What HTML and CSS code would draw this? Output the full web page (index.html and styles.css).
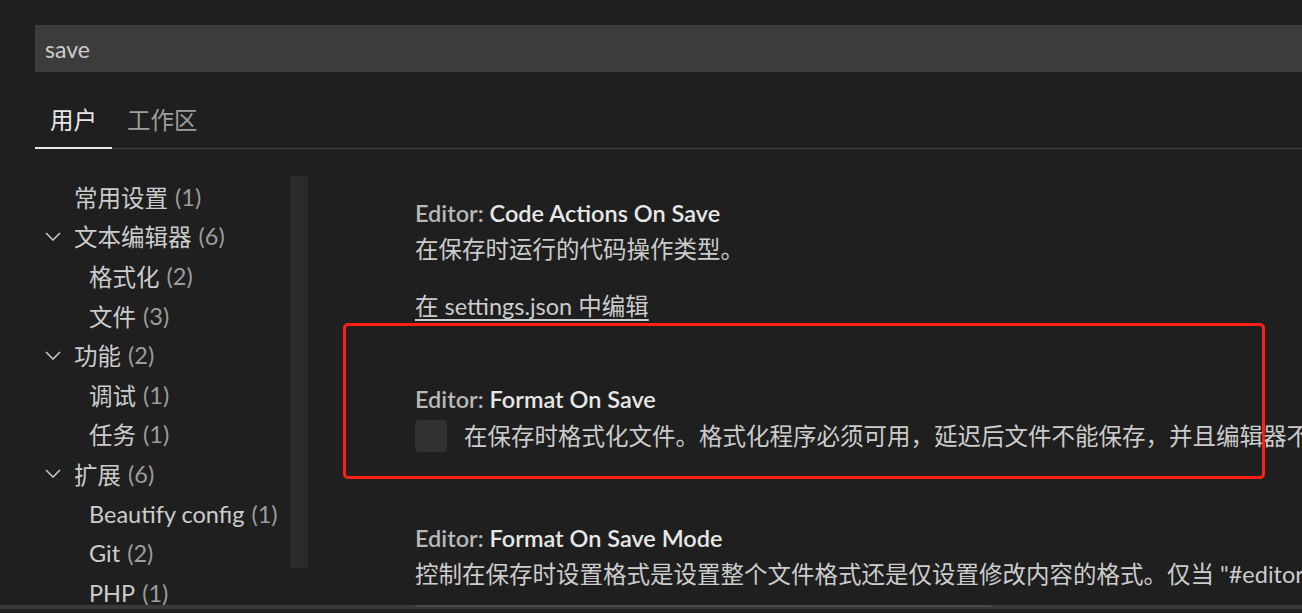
FILE: index.html
```html
<!DOCTYPE html>
<html lang="zh-CN">
<head>
<meta charset="utf-8">
<title>设置</title>
<link rel="stylesheet" href="styles.css">
</head>
<body>
<div class="page">
  <div class="search">save</div>
  <div class="tabs">
    <div class="tab active">用户</div>
    <div class="tab">工作区</div>
  </div>
  <div class="main">
    <div class="toc">
      <div class="tree">
        <div class="row l1 leaf"><span class="chev"></span><span class="label">常用设置</span><span class="count">(1)</span></div>
        <div class="row l1"><span class="chev"><svg viewBox="0 0 16 9" width="16" height="9"><path d="M1 1 L8 8 L15 1" fill="none" stroke="#c5c5c5" stroke-width="1.6"/></svg></span><span class="label">文本编辑器</span><span class="count">(6)</span></div>
        <div class="row l2"><span class="label">格式化</span><span class="count">(2)</span></div>
        <div class="row l2"><span class="label">文件</span><span class="count">(3)</span></div>
        <div class="row l1"><span class="chev"><svg viewBox="0 0 16 9" width="16" height="9"><path d="M1 1 L8 8 L15 1" fill="none" stroke="#c5c5c5" stroke-width="1.6"/></svg></span><span class="label">功能</span><span class="count">(2)</span></div>
        <div class="row l2"><span class="label">调试</span><span class="count">(1)</span></div>
        <div class="row l2"><span class="label">任务</span><span class="count">(1)</span></div>
        <div class="row l1"><span class="chev"><svg viewBox="0 0 16 9" width="16" height="9"><path d="M1 1 L8 8 L15 1" fill="none" stroke="#c5c5c5" stroke-width="1.6"/></svg></span><span class="label">扩展</span><span class="count">(6)</span></div>
        <div class="row l2"><span class="label">Beautify config</span><span class="count">(1)</span></div>
        <div class="row l2"><span class="label">Git</span><span class="count">(2)</span></div>
        <div class="row l2"><span class="label">PHP</span><span class="count">(1)</span></div>
      </div>
      <div class="vscroll"><div class="thumb"></div></div>
    </div>
    <div class="settings">
      <div class="item">
        <div class="title"><span class="cat">Editor: </span><span class="name">Code Actions On Save</span></div>
        <div class="desc">在保存时运行的代码操作类型。</div>
        <div class="link">在 settings.json 中编辑</div>
      </div>
      <div class="item">
        <div class="title"><span class="cat">Editor: </span><span class="name">Format On Save</span></div>
        <div class="check-row"><span class="checkbox"></span><span class="desc">在保存时格式化文件。格式化程序必须可用，延迟后文件不能保存，并且编辑器不能关闭。</span></div>
      </div>
      <div class="item">
        <div class="title"><span class="cat">Editor: </span><span class="name">Format On Save Mode</span></div>
        <div class="desc">控制在保存时设置格式是设置整个文件格式还是仅设置修改内容的格式。仅当 "#editor.formatOnSave#" 处于启用状态时适用。</div>
      </div>
    </div>
  </div>
  <div class="hbar"><div class="hthumb"></div></div>
  <div class="highlight"></div>
</div>
</body>
</html>
```

FILE: styles.css
```css
html, body {
  margin: 0;
  padding: 0;
  background: #1f1f1f;
}

body {
  font-family: Lato, "Noto Sans CJK SC", sans-serif;
  font-size: 23.5px;
  color: #cccccc;
  overflow: hidden;
}

.page {
  position: relative;
  width: 1302px;
  height: 613px;
  overflow: hidden;
  display: flex;
  flex-direction: column;
}

.search {
  margin: 25px 0 0 35px;
  height: 47px;
  line-height: 49px;
  padding-left: 10px;
  background: #3c3c3c;
  color: #cccccc;
  font-size: 23px;
}

.tabs {
  display: flex;
  margin: 22px 0 0 35px;
  border-bottom: 1px solid #3e3e3e;
}

.tab {
  height: 53px;
  line-height: 53px;
  padding: 0 15px;
  color: #9d9d9d;
  border-bottom: 2px solid transparent;
  margin-bottom: -1px;
}

.tab.active {
  color: #e7e7e7;
  border-bottom-color: #e7e7e7;
}

.main {
  display: flex;
  margin-top: 27px;
  flex: 1;
  min-height: 0;
}

.toc {
  display: flex;
  width: 308px;
  flex-shrink: 0;
}

.tree {
  width: 290px;
  padding-top: 1px;
}

.row {
  display: flex;
  align-items: center;
  height: 39.6px;
  white-space: nowrap;
  color: #cccccc;
}

.row.l1 {
  padding-left: 45px;
}

.row.l2 {
  padding-left: 89px;
}

.chev {
  display: inline-flex;
  align-items: center;
  width: 16px;
  height: 16px;
  margin-right: 13px;
}

.chev svg {
  display: block;
}

.count {
  margin-left: 7px;
  color: #9d9d9d;
}

.vscroll {
  width: 18px;
}

.thumb {
  height: 392px;
  background: #2a2a2a;
}

.settings {
  flex: 1;
  min-width: 0;
  padding-left: 107px;
  overflow: hidden;
}

.item {
  padding: 19px 0 38px;
}

.title {
  height: 36px;
  line-height: 36px;
  font-weight: 600;
  white-space: nowrap;
}

.cat {
  color: #b8b8b8;
}

.name {
  color: #e7e7e7;
}

.desc {
  line-height: 36px;
  white-space: nowrap;
  color: #cccccc;
}

.link {
  margin-top: 21px;
  line-height: 36px;
  color: #cccccc;
  text-decoration: underline;
  text-underline-offset: 4px;
}

.check-row {
  display: flex;
  align-items: center;
  height: 38px;
  margin-bottom: 8px;
  white-space: nowrap;
}

.checkbox {
  flex-shrink: 0;
  width: 32px;
  height: 32px;
  border-radius: 4px;
  background: #313131;
  margin-right: 17px;
}

.hbar {
  position: absolute;
  left: 0;
  right: 0;
  top: 605px;
  height: 4px;
  background: #3a3a3a;
}

.hthumb {
  margin-left: 415px;
  width: 576px;
  height: 2px;
  background: #4a4a4a;
}

.highlight {
  position: absolute;
  left: 343px;
  top: 323px;
  width: 922px;
  height: 156px;
  box-sizing: border-box;
  border: 3px solid #ff2015;
  border-radius: 5px;
}
```
